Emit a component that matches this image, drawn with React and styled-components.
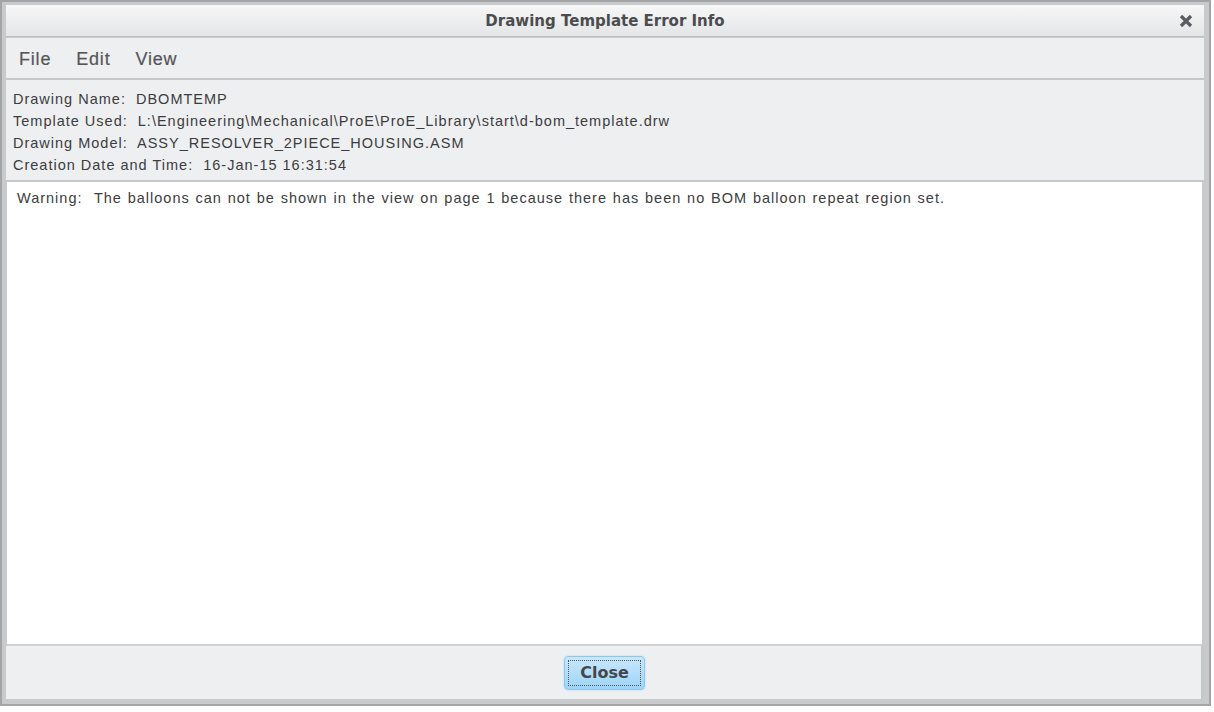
import React from 'react';
import styled, { createGlobalStyle } from 'styled-components';

const GlobalStyle = createGlobalStyle`
  html, body {
    margin: 0;
    padding: 0;
    background: #ffffff;
  }
  body {
    font-family: 'Liberation Sans', Arial, sans-serif;
  }
`;

const Window = styled.div`
  box-sizing: border-box;
  width: 1211px;
  height: 706px;
  display: flex;
  flex-direction: column;
  background: #c9cacc;
  border: 2px solid #a3a4a6;
  padding: 3px 5px 5px 4px;
`;

const TitleBar = styled.div`
  height: 30px;
  flex: none;
  display: flex;
  align-items: center;
  justify-content: center;
  position: relative;
  background: linear-gradient(#f7f7f7, #e4e5e6);
  border-bottom: 1px solid #bfc0c2;
  color: #4b4c4e;
  font-family: 'DejaVu Sans', Verdana, sans-serif;
  font-weight: bold;
  font-size: 15px;
  padding-top: 1px;
`;

const CloseX = styled.span`
  position: absolute;
  right: 9px;
  top: 7px;
  width: 18px;
  height: 18px;
  display: flex;
  align-items: center;
  justify-content: center;
`;

const MenuBar = styled.div`
  height: 42px;
  flex: none;
  display: flex;
  align-items: center;
  gap: 25px;
  padding: 2px 0 0 13px;
  box-sizing: border-box;
  margin-top: 1px;
  background: #eeeff1;
  border-bottom: 2px solid #c6c7c9;
`;

const MenuItem = styled.span`
  font-size: 18px;
  letter-spacing: 0.8px;
  color: #55565a;
  -webkit-text-stroke: 0.2px #55565a;
`;

const InfoPanel = styled.div`
  flex: none;
  height: 102px;
  box-sizing: border-box;
  padding: 8px 0 0 7px;
  background: #eeeff1;
  border-bottom: 2px solid #c6c7c9;
`;

const InfoLine = styled.div`
  font-size: 14.5px;
  letter-spacing: 1px;
  line-height: 22px;
  color: #3c3d40;
  white-space: pre;
`;

const MessageArea = styled.div`
  flex: 1;
  background: #ffffff;
  margin-left: 1px;
  margin-right: 2px;
  padding: 6px 0 0 10px;
  font-size: 14.5px;
  letter-spacing: 1px;
  word-spacing: 0.8px;
  line-height: 20px;
  color: #3c3d40;
  white-space: pre;
  border-bottom: 2px solid #d1d2d4;
`;

const Footer = styled.div`
  flex: none;
  height: 53px;
  display: flex;
  align-items: center;
  justify-content: center;
  background: #eeeff1;
  border-right: 3px solid #c6c7c9;
`;

const Button = styled.button`
  width: 81px;
  height: 34px;
  padding: 3px;
  margin-left: 2px;
  border: 1px solid #8cc8ee;
  border-radius: 4px;
  background: linear-gradient(#c9e8fc, #9dd4f8);
  box-shadow: 0 0 2px #a9d8f7;
  font-family: 'DejaVu Sans', Verdana, sans-serif;
  font-weight: bold;
  font-size: 16px;
  color: #46474a;
  cursor: pointer;
`;

const Focus = styled.span`
  display: flex;
  align-items: center;
  justify-content: center;
  height: 100%;
  border: 1px dotted #555;
  box-sizing: border-box;
`;

export default function App() {
  return (
    <>
      <GlobalStyle />
      <Window>
        <TitleBar>
          Drawing Template Error Info
          <CloseX>
            <svg width="14" height="14" viewBox="0 0 14 14">
              <path d="M2 2 L12 12 M12 2 L2 12" stroke="#5b5c5f" strokeWidth="3.2" strokeLinecap="butt" />
            </svg>
          </CloseX>
        </TitleBar>
        <MenuBar>
          <MenuItem>File</MenuItem>
          <MenuItem>Edit</MenuItem>
          <MenuItem>View</MenuItem>
        </MenuBar>
        <InfoPanel>
          <InfoLine>Drawing Name:  DBOMTEMP</InfoLine>
          <InfoLine>Template Used:  L:\Engineering\Mechanical\ProE\ProE_Library\start\d-bom_template.drw</InfoLine>
          <InfoLine>Drawing Model:  ASSY_RESOLVER_2PIECE_HOUSING.ASM</InfoLine>
          <InfoLine>Creation Date and Time:  16-Jan-15 16:31:54</InfoLine>
        </InfoPanel>
        <MessageArea>
          Warning:  The balloons can not be shown in the view on page 1 because there has been no BOM balloon repeat region set.
        </MessageArea>
        <Footer>
          <Button>
            <Focus>Close</Focus>
          </Button>
        </Footer>
      </Window>
    </>
  );
}
